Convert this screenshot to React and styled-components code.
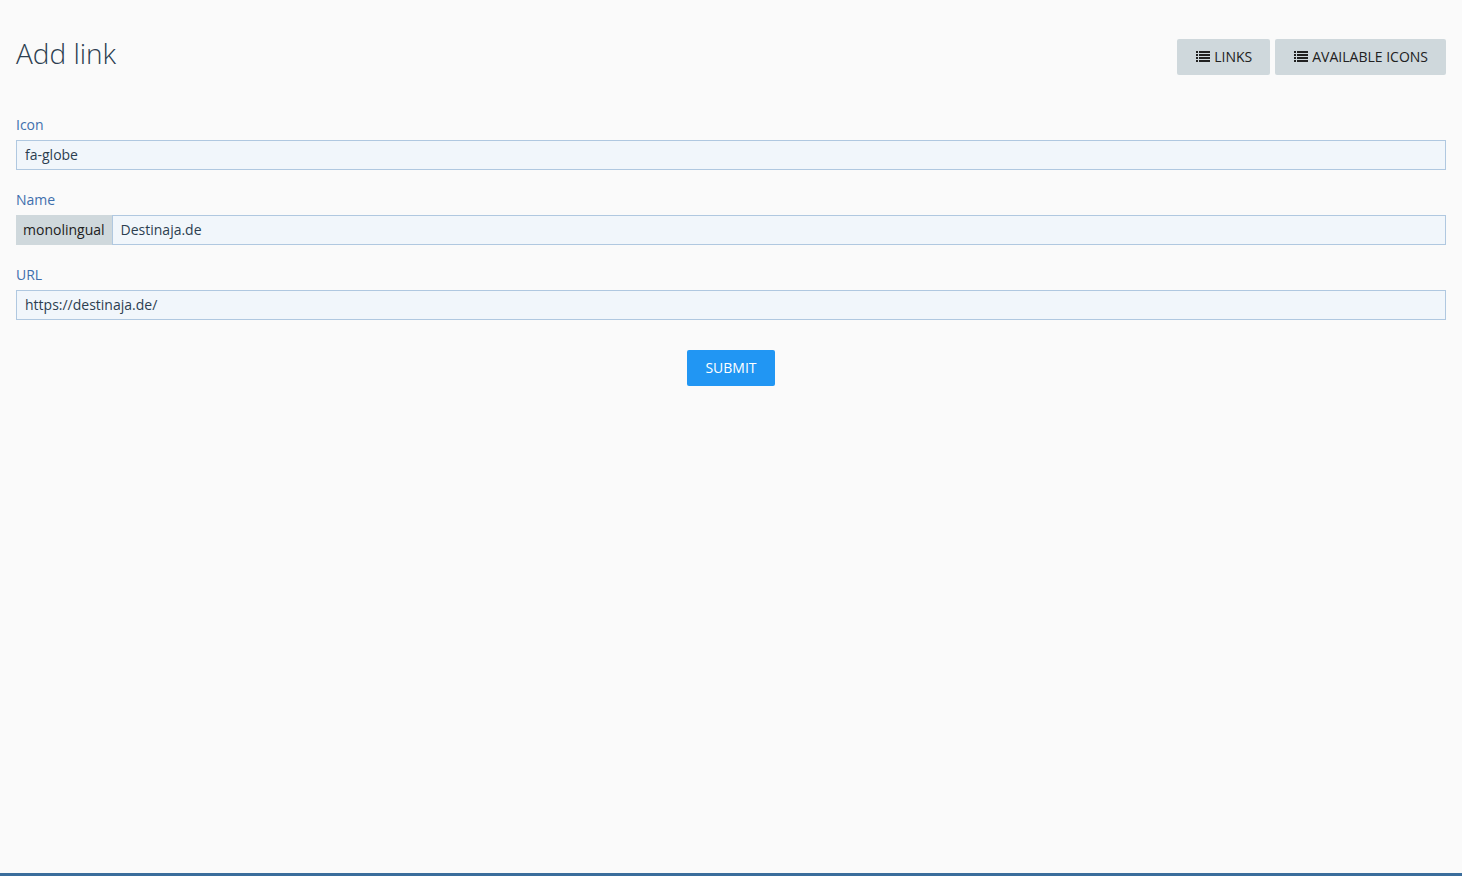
import { useState } from 'react';
import styled, { createGlobalStyle } from 'styled-components';

const GlobalStyle = createGlobalStyle`
  * {
    box-sizing: border-box;
  }
  body {
    margin: 0;
    background-color: #fafafa;
    color: #2c3e50;
    font-family: "Open Sans", "Liberation Sans", sans-serif;
    font-size: 14px;
    line-height: 20px;
  }
`;
const Page = styled.div`
  display: flex;
  flex-direction: column;
  min-height: 100vh;
  border-bottom: 3px solid #3a6d9c;
`;
const Main = styled.main`
  padding: 34px 16px;
`;
const Header = styled.header`
  display: flex;
  justify-content: space-between;
  align-items: flex-start;
  margin-bottom: 40px;
  h1 {
    margin: 0;
    font-size: 28px;
    font-weight: 300;
    line-height: 38px;
  }
`;
const Nav = styled.nav`
  display: flex;
  gap: 5px;
  padding-top: 5px;
`;
const NavButton = styled.a`
  display: flex;
  align-items: center;
  gap: 4px;
  padding: 8px 18px 8px 19px;
  border-radius: 2px;
  background-color: #cfd8dc;
  color: #212121;
  text-decoration: none;
  text-transform: uppercase;
  &:hover {
    background-color: #b0bec5;
  }
`;
const Form = styled.form`
  display: flex;
  flex-direction: column;
  gap: 20px;
`;
const FieldRow = styled.div`
  label {
    display: block;
    margin-bottom: 5px;
    color: #3f6fad;
  }
`;
const InputGroup = styled.div`
  display: flex;
`;
const Prefix = styled.button`
  padding: 0 7px;
  border: 0;
  background-color: #cfd8dc;
  color: #212121;
  font: inherit;
  cursor: pointer;
`;
const TextInput = styled.input`
  flex: 1;
  min-width: 0;
  height: 30px;
  padding: 3px 8px 5px;
  border: 1px solid #b0c8e0;
  border-radius: 0;
  background-color: #f1f6fb;
  color: #2c3e50;
  font: inherit;
  outline: none;
  &:focus {
    border-color: #2196f3;
  }
`;
const Submit = styled.button`
  align-self: center;
  margin-top: 10px;
  padding: 8px 18px;
  border: 0;
  border-radius: 2px;
  background-color: #2196f3;
  color: #fff;
  font: inherit;
  text-transform: uppercase;
  cursor: pointer;
`;

function ListIcon() {
  return (
    <svg width="14" height="14" viewBox="0 0 14 14" fill="currentColor" shapeRendering="crispEdges" aria-hidden="true">
      <path d="M0 1h2v2H0zM3 1h11v2H3zM0 4h2v2H0zM3 4h11v2H3zM0 7h2v2H0zM3 7h11v2H3zM0 10h2v2H0zM3 10h11v2H3z" />
    </svg>
  );
}

function Field({ id, label, prefix, value, onChange }) {
  return (
    <FieldRow>
      <label htmlFor={id}>{label}</label>
      <InputGroup>
        {prefix && <Prefix type="button">{prefix}</Prefix>}
        <TextInput id={id} name={id} type="text" value={value} onChange={onChange} />
      </InputGroup>
    </FieldRow>
  );
}

function App() {
  const [link, setLink] = useState({
    icon: 'fa-globe',
    name: 'Destinaja.de',
    url: 'https://destinaja.de/',
  });
  const onChange = (e) => {
    const { name, value } = e.target;
    setLink(prev => ({ ...prev, [name]: value }));
  };

  return (
    <Page>
      <GlobalStyle />
      <Main>
        <Header>
          <h1>Add link</h1>
          <Nav>
            <NavButton href="#links"><ListIcon />Links</NavButton>
            <NavButton href="#icons"><ListIcon />Available icons</NavButton>
          </Nav>
        </Header>
        <Form onSubmit={e => e.preventDefault()}>
          <Field id="icon" label="Icon" value={link.icon} onChange={onChange} />
          <Field id="name" label="Name" prefix="monolingual" value={link.name} onChange={onChange} />
          <Field id="url" label="URL" value={link.url} onChange={onChange} />
          <Submit type="submit">Submit</Submit>
        </Form>
      </Main>
    </Page>
  );
}

export default App;
